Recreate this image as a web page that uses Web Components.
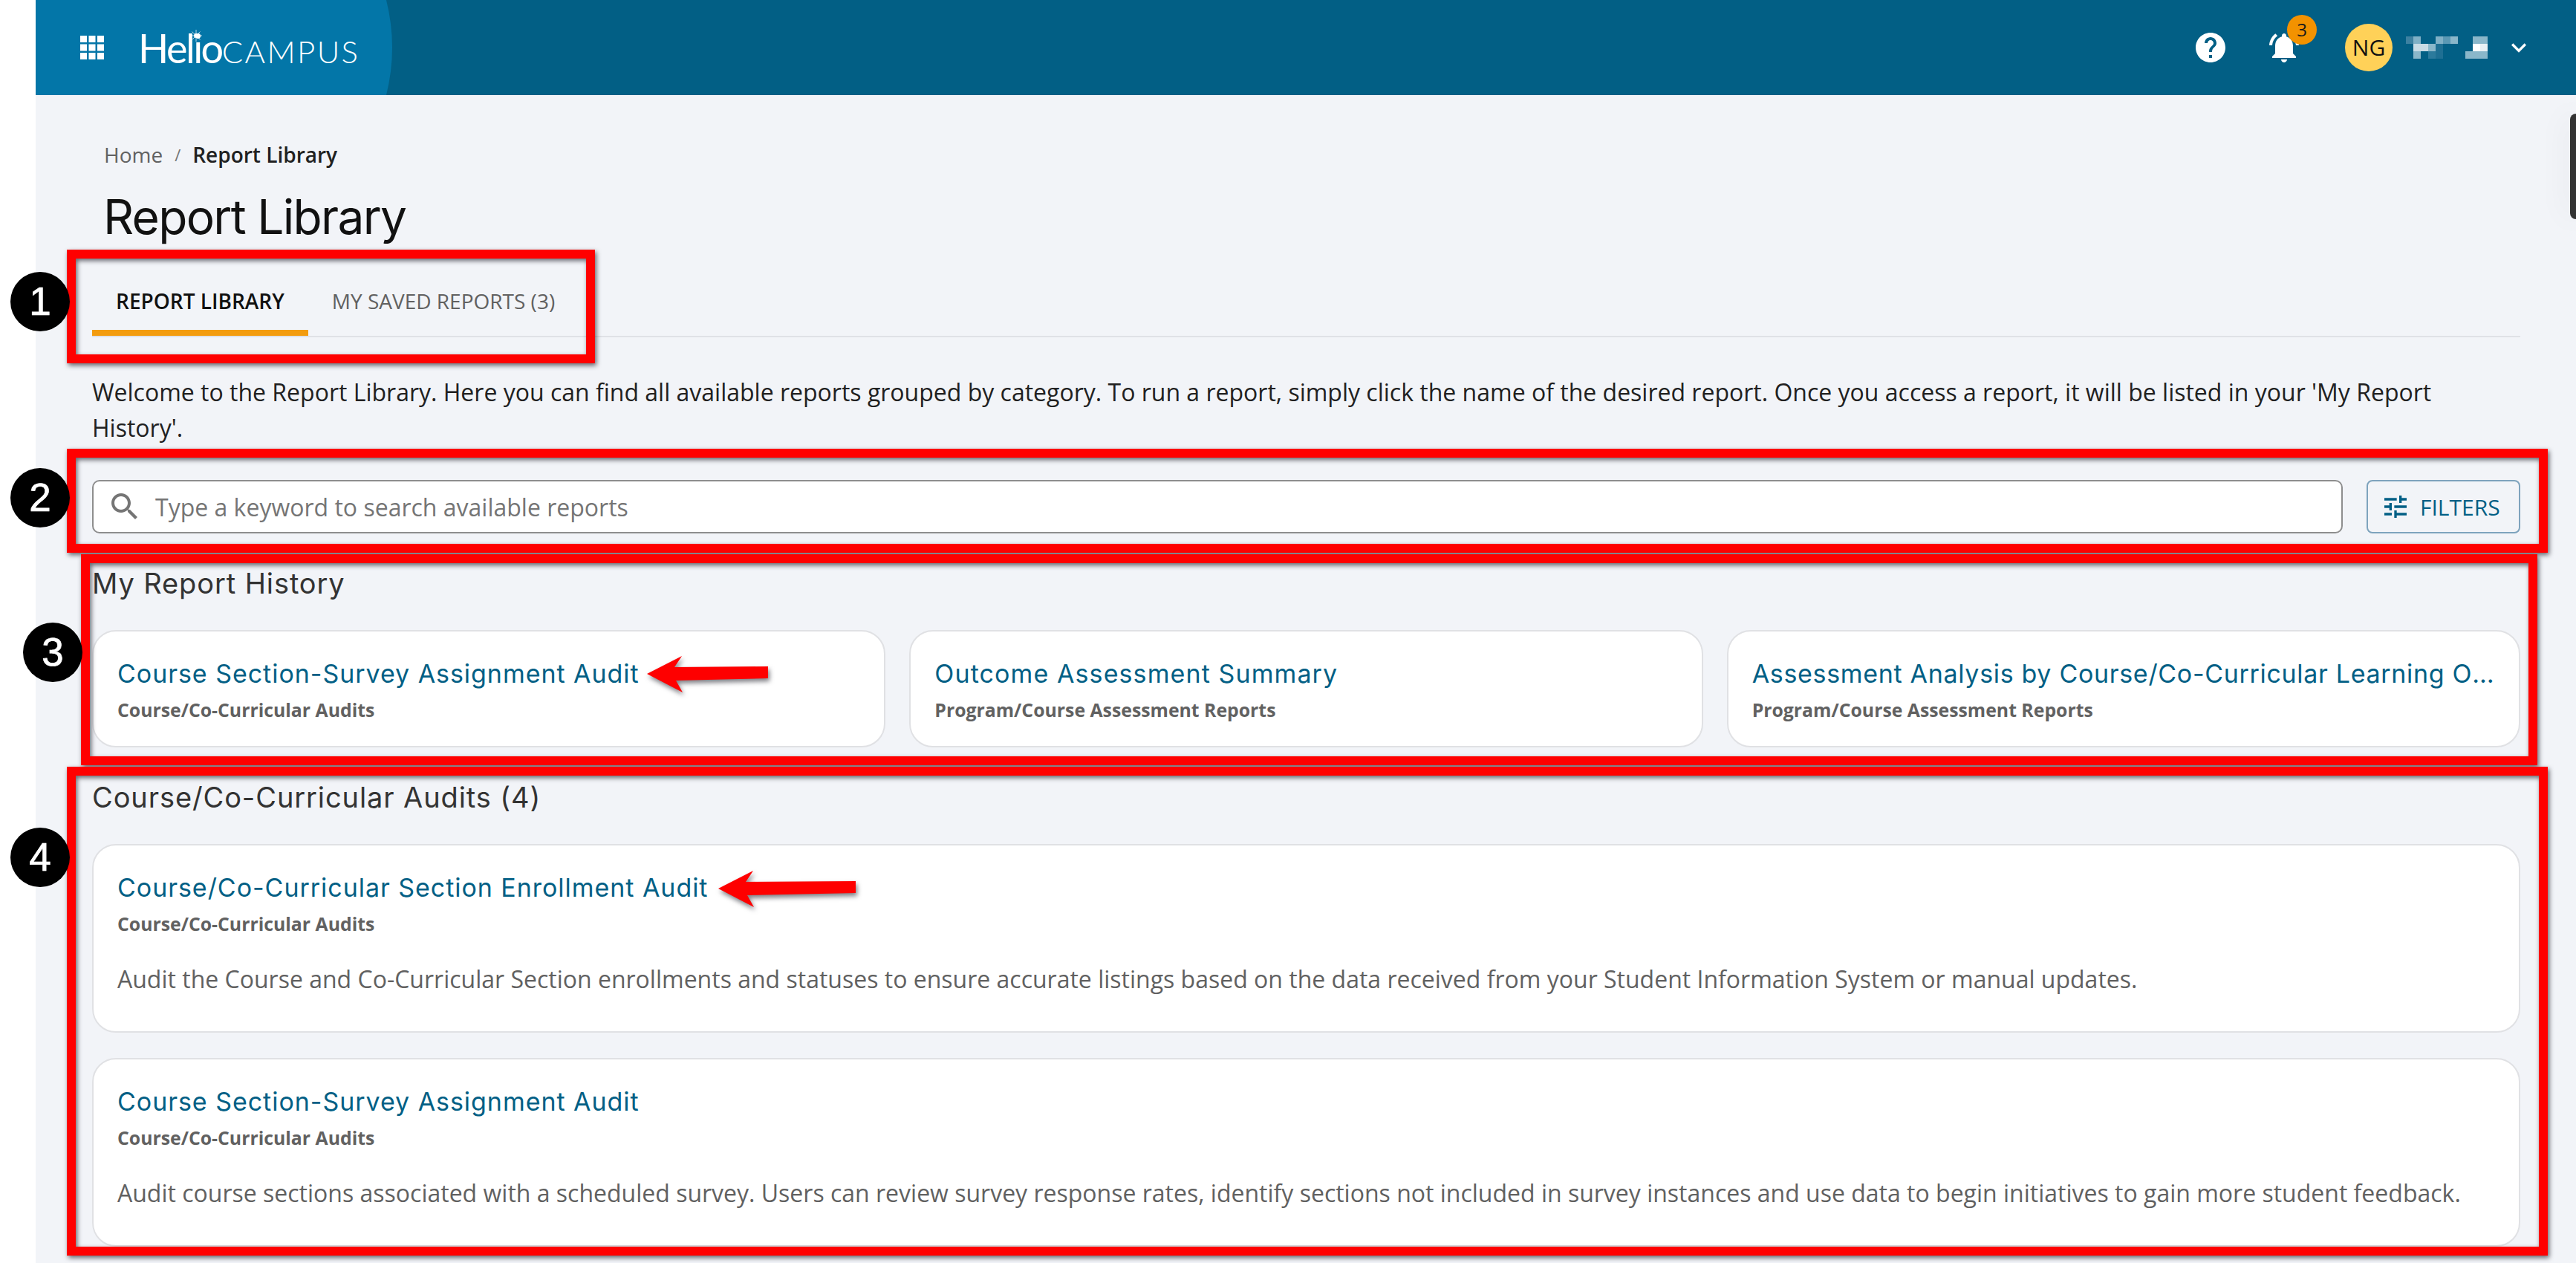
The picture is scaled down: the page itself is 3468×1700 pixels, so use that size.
<!DOCTYPE html>
<html>
<head>
<meta charset="utf-8">
<title>Report Library</title>
<style>
  html, body { margin: 0; height: 1700px; overflow: hidden; background: #fff; }
  body { font-family: "Open Sans", "Liberation Sans", sans-serif; }
</style>
</head>
<body>
<report-page>
  <app-header slot="header"></app-header>
  <bread-crumbs slot="crumbs" current="Report Library">Home</bread-crumbs>
  <h1 slot="title">Report Library</h1>
  <report-tabs slot="tabs"></report-tabs>
  <p slot="intro">Welcome to the Report Library. Here you can find all available reports grouped by category. To run a report, simply click the name of the desired report. Once you access a report, it will be listed in your 'My Report History'.</p>
  <search-bar slot="search"></search-bar>
  <report-section heading="My Report History" columns="3">
    <report-card title-text="Course Section-Survey Assignment Audit" category="Course/Co-Curricular Audits"></report-card>
    <report-card title-text="Outcome Assessment Summary" category="Program/Course Assessment Reports" style="--title-spacing:1.1px"></report-card>
    <report-card title-text="Assessment Analysis by Course/Co-Curricular Learning Outcome" category="Program/Course Assessment Reports" style="--title-spacing:.68px"></report-card>
  </report-section>
  <report-section heading="Course/Co-Curricular Audits (4)" columns="1">
    <report-card title-text="Course/Co-Curricular Section Enrollment Audit" category="Course/Co-Curricular Audits">Audit the Course and Co-Curricular Section enrollments and statuses to ensure accurate listings based on the data received from your Student Information System or manual updates.</report-card>
    <report-card title-text="Course Section-Survey Assignment Audit" category="Course/Co-Curricular Audits">Audit course sections associated with a scheduled survey. Users can review survey response rates, identify sections not included in survey instances and use data to begin initiatives to gain more student feedback.</report-card>
  </report-section>

  <red-frame slot="overlay" style="left:90px;top:336px;width:711px;height:153px"></red-frame>
  <red-frame slot="overlay" style="left:90px;top:604px;width:3340px;height:140px"></red-frame>
  <red-frame slot="overlay" style="left:109px;top:746px;width:3307px;height:284px"></red-frame>
  <red-frame slot="overlay" style="left:90px;top:1032px;width:3340px;height:658px"></red-frame>
  <step-badge slot="overlay" style="left:14px;top:366px">1</step-badge>
  <step-badge slot="overlay" style="left:14px;top:630px">2</step-badge>
  <step-badge slot="overlay" style="left:31px;top:838px">3</step-badge>
  <step-badge slot="overlay" style="left:14px;top:1114px">4</step-badge>
  <red-arrow slot="overlay" length="162" style="left:872px;top:883px"></red-arrow>
  <red-arrow slot="overlay" length="184" style="left:968px;top:1172px"></red-arrow>
  <div slot="overlay" style="position:absolute;left:3460px;top:153px;width:8px;height:142px;background:#333;border-radius:16px 0 0 16px;box-shadow:0 0 40px rgba(0,0,0,.12)"></div>
</report-page>

<script>
const HEADING_FONT = '"Inter", "Liberation Sans", sans-serif';

class ReportPage extends HTMLElement {
  constructor() {
    super();
    this.attachShadow({ mode: 'open' });
    this.shadowRoot.innerHTML = `
      <style>
        :host { display: block; position: relative; height: 1700px; overflow: hidden; }
        #shell { margin-left: 48px; height: 1700px; background: #f2f4f8; }
        main { padding: 0 75px 0 76px; display: flex; flex-direction: column; }
        ::slotted(h1) {
          margin: 24px 0 34px 15px;
          font: 400 64px/80px ${HEADING_FONT};
          letter-spacing: -1.7px;
          color: #111;
        }
        ::slotted(p) {
          margin: 50px 0 46px;
          font-size: 32px;
          line-height: 48px;
          color: #212121;
        }
      </style>
      <div id="shell">
        <slot name="header"></slot>
        <main>
          <slot name="crumbs"></slot>
          <slot name="title"></slot>
          <slot name="tabs"></slot>
          <slot name="intro"></slot>
          <slot name="search"></slot>
          <slot></slot>
        </main>
      </div>
      <slot name="overlay"></slot>
    `;
  }
}

class AppHeader extends HTMLElement {
  constructor() {
    super();
    this.attachShadow({ mode: 'open' });
    const blur = [
      ['#3d81a1','#7fb0c6',0,0,'#7fb0c6','#5a98b4','#8ab7ca',0,0,'#8ab7ca','#8ab7ca'],
      [0,'#c8dbe5','#c8dbe5','#8ab7ca','#1e6f93',0,0,0,0,'#fff','#e8f0f4'],
      [0,'#8ab7ca',0,'#2c7a9c','#1e6f93',0,0,0,'#8ab7ca','#8ab7ca','#8ab7ca']
    ].flat().map(c => `<i style="background:${c || 'transparent'}"></i>`).join('');
    this.shadowRoot.innerHTML = `
      <style>
        :host { display: block; }
        header {
          height: 128px; background: #025f85; color: #fff;
          display: flex; align-items: center; position: relative;
        }
        #brand {
          width: 480px; height: 128px; flex: none; background: #0376a8;
          clip-path: path('M0 0H472Q488 64 472 128H0Z');
          display: flex; align-items: center; padding-left: 60px; box-sizing: border-box;
        }
        #logo { margin-left: 46px; font-family: Lato, sans-serif; font-weight: 300; white-space: nowrap; position: relative; }
        #logo b { font-weight: 400; font-size: 54px; letter-spacing: -2.5px; }
        #logo span { font-size: 42px; letter-spacing: 2.4px; }
        #logo svg { position: absolute; left: 70px; top: 8px; }
        #tools { margin-left: auto; display: flex; align-items: center; height: 128px; padding-right: 57px; }
        #tools svg { display: block; fill: #fff; flex: none; }
        #bell { position: relative; margin-left: 51px; }
        #count {
          position: absolute; left: 28px; top: -20px; width: 40px; height: 40px;
          border-radius: 50%; background: #f39200; color: #1a1a1a;
          font-size: 24px; line-height: 40px; text-align: center;
        }
        #avatar {
          margin-left: 58px; width: 64px; height: 64px; border-radius: 50%;
          background: #ffd158; color: #111; font-size: 30px; line-height: 64px; text-align: center;
        }
        #blur { margin-left: 18px; display: grid; grid-template-columns: repeat(11, 10px); grid-auto-rows: 10px; }
        #blur i { display: block; }
        #chev { margin-left: 22px; }
      </style>
      <header>
        <div id="brand">
          <svg width="32" height="32" viewBox="0 0 32 32" fill="#fff">
            <rect width="9" height="9"/><rect x="11.5" width="9" height="9"/><rect x="23" width="9" height="9"/>
            <rect y="11.5" width="9" height="9"/><rect x="11.5" y="11.5" width="9" height="9"/><rect x="23" y="11.5" width="9" height="9"/>
            <rect y="23" width="9" height="9"/><rect x="11.5" y="23" width="9" height="9"/><rect x="23" y="23" width="9" height="9"/>
          </svg>
          <div id="logo"><b>Helio</b><span>CAMPUS</span>
            <svg width="16" height="16" viewBox="0 0 16 16" fill="#fff"><circle cx="8" cy="8" r="3"/><path d="M8 0v16M0 8h16M2.5 2.5l11 11M13.5 2.5l-11 11" stroke="#fff" stroke-width=".7"/></svg>
          </div>
        </div>
        <div id="tools">
          <svg width="48" height="48" viewBox="0 0 24 24"><path d="M12 2C6.48 2 2 6.48 2 12s4.48 10 10 10 10-4.48 10-10S17.52 2 12 2zm1 17h-2v-2h2v2zm2.07-7.75l-.9.92C13.45 12.9 13 13.5 13 15h-2v-.5c0-1.1.45-2.1 1.17-2.83l1.24-1.26c.37-.36.59-.86.59-1.41 0-1.1-.9-2-2-2s-2 .9-2 2H8c0-2.21 1.79-4 4-4s4 1.79 4 4c0 .88-.36 1.68-.93 2.25z"/></svg>
          <div id="bell">
            <svg width="48" height="48" viewBox="0 0 24 24"><path d="M7.58 4.08 6.15 2.65C3.75 4.48 2.17 7.3 2.03 10.5h2c.15-2.65 1.51-4.97 3.55-6.42zm12.39 6.42h2c-.15-3.2-1.73-6.02-4.12-7.85l-1.42 1.43c2.02 1.45 3.39 3.77 3.54 6.42zM18 11c0-3.07-1.64-5.64-4.5-6.32V4c0-.83-.67-1.5-1.5-1.5s-1.5.67-1.5 1.5v.68C7.63 5.36 6 7.92 6 11v5l-2 2v1h16v-1l-2-2v-5zm-6 11c.14 0 .27-.01.4-.04.65-.14 1.18-.58 1.44-1.18.1-.24.15-.5.15-.78h-4c.01 1.1.9 2 2.01 2z"/></svg>
            <div id="count">3</div>
          </div>
          <div id="avatar">NG</div>
          <div id="blur">${blur}</div>
          <svg id="chev" width="40" height="40" viewBox="0 0 24 24"><path d="M16.59 8.59 12 13.17 7.41 8.59 6 10l6 6 6-6z"/></svg>
        </div>
      </header>
    `;
  }
}

class BreadCrumbs extends HTMLElement {
  constructor() {
    super();
    this.attachShadow({ mode: 'open' });
    this.shadowRoot.innerHTML = `
      <style>
        :host { display: flex; margin: 60px 0 0 16px; font-size: 28px; line-height: 40px; color: #616161; }
        i { font-style: normal; margin: 0 16px; font-size: 22px; color: #757575; }
        b { font-weight: 600; color: #212121; }
      </style>
      <slot></slot><i>/</i><b></b>
    `;
  }
  connectedCallback() {
    this.shadowRoot.querySelector('b').textContent = this.getAttribute('current');
  }
}

class ReportTabs extends HTMLElement {
  constructor() {
    super();
    this.attachShadow({ mode: 'open' });
    this.shadowRoot.innerHTML = `
      <style>
        :host { display: flex; border-bottom: 2px solid #dfe1e6; font-size: 28px; }
        div { height: 78px; line-height: 78px; padding: 0 32px; border-bottom: 8px solid transparent; white-space: nowrap; color: #616161; }
        #on { color: #111; font-weight: 600; border-bottom-color: #f39c0f; }
      </style>
      <div id="on">REPORT LIBRARY</div>
      <div>MY SAVED REPORTS (3)</div>
    `;
  }
}

class SearchBar extends HTMLElement {
  constructor() {
    super();
    this.attachShadow({ mode: 'open' });
    this.shadowRoot.innerHTML = `
      <style>
        :host { display: flex; gap: 32px; height: 72px; }
        #box {
          flex: 1; display: flex; align-items: center; gap: 17px; box-sizing: border-box;
          padding-left: 18px; background: #fff; border: 2px solid #8e8e8e; border-radius: 10px;
          font-size: 32px; color: #757575;
        }
        #box svg { fill: #757575; }
        button {
          width: 207px; box-sizing: border-box; padding: 0 0 0 17px; display: flex; align-items: center; gap: 13px;
          background: #f2f4f8; border: 2px solid #7ea3bd; border-radius: 8px;
          font: 30px "Open Sans", sans-serif; color: #025f85;
        }
        button svg { fill: #025f85; }
      </style>
      <div id="box">
        <svg width="48" height="48" viewBox="0 0 24 24"><path d="M15.5 14h-.79l-.28-.27C15.41 12.59 16 11.11 16 9.5 16 5.91 13.09 3 9.5 3S3 5.91 3 9.5 5.91 16 9.5 16c1.61 0 3.09-.59 4.23-1.57l.27.28v.79l5 4.99L20.49 19l-4.99-5zm-6 0C7.01 14 5 11.99 5 9.5S7.01 5 9.5 5 14 7.01 14 9.5 11.99 14 9.5 14z"/></svg>
        <span>Type a keyword to search available reports</span>
      </div>
      <button>
        <svg width="40" height="40" viewBox="0 0 24 24"><path d="M3 17v2h6v-2H3zM3 5v2h10V5H3zm10 16v-2h8v-2h-8v-2h-2v6h2zM7 9v2H3v2h4v2h2V9H7zm14 4v-2H11v2h10zm-6-4h2V7h4V5h-4V3h-2v6z"/></svg>
        FILTERS
      </button>
    `;
  }
}

class ReportSection extends HTMLElement {
  constructor() {
    super();
    this.attachShadow({ mode: 'open' });
    this.shadowRoot.innerHTML = `
      <style>
        :host { display: block; margin-top: 43px; }
        :host + :host { margin-top: 42px; }
        h2 { margin: 0 0 39px; font: 400 38px/48px ${HEADING_FONT}; letter-spacing: .9px; color: #333; }
        #list { display: grid; gap: 34px 32px; }
      </style>
      <h2></h2>
      <div id="list"><slot></slot></div>
    `;
  }
  connectedCallback() {
    this.shadowRoot.querySelector('h2').textContent = this.getAttribute('heading');
    const n = this.getAttribute('columns') || 1;
    this.shadowRoot.getElementById('list').style.gridTemplateColumns = `repeat(${n}, minmax(0, 1fr))`;
  }
}

class ReportCard extends HTMLElement {
  constructor() {
    super();
    this.attachShadow({ mode: 'open' });
    this.shadowRoot.innerHTML = `
      <style>
        :host {
          display: block; box-sizing: border-box; min-width: 0;
          padding: 33px 32px 25px; background: #fff;
          border: 2px solid #e0e1e4; border-radius: 32px;
        }
        #t { font: 400 34px/48px ${HEADING_FONT}; letter-spacing: var(--title-spacing, .96px); color: #025f85; white-space: nowrap; overflow: hidden; text-overflow: ellipsis; }
        #c { font-size: 24.8px; line-height: 48px; font-weight: 700; color: #616161; }
        #d { margin-top: 27px; margin-bottom: 21px; font-size: 32px; line-height: 48px; color: #616161; white-space: nowrap; display: block; }
        :host(:empty) #d { display: none; }
      </style>
      <div id="t"></div>
      <div id="c"></div>
      <div id="d"><slot></slot></div>
    `;
  }
  connectedCallback() {
    this.shadowRoot.getElementById('t').textContent = this.getAttribute('title-text');
    this.shadowRoot.getElementById('c').textContent = this.getAttribute('category');
  }
}

class RedFrame extends HTMLElement {
  constructor() {
    super();
    this.attachShadow({ mode: 'open' });
    this.shadowRoot.innerHTML = `
      <style>
        :host {
          position: absolute; box-sizing: border-box; border: 12px solid #ff0000;
          filter: drop-shadow(2px 3px 3px rgba(40,40,50,.7)); pointer-events: none;
        }
      </style>
    `;
  }
}

class StepBadge extends HTMLElement {
  constructor() {
    super();
    this.attachShadow({ mode: 'open' });
    this.shadowRoot.innerHTML = `
      <style>
        :host {
          position: absolute; width: 80px; height: 80px; border-radius: 50%;
          background: #000; color: #fff; text-align: center;
          font: 53px/80px "Liberation Sans", Arial, sans-serif;
          -webkit-text-stroke: .7px #fff;
        }
      </style>
      <slot></slot>
    `;
  }
}

class RedArrow extends HTMLElement {
  constructor() {
    super();
    this.attachShadow({ mode: 'open' });
    this.shadowRoot.innerHTML = `
      <style>
        :host { position: absolute; height: 50px; }
        svg { display: block; filter: drop-shadow(2px 4px 3px rgba(40,40,50,.6)); overflow: visible; }
      </style>
      <svg height="50"><path fill="#fe0000"/></svg>
    `;
  }
  connectedCallback() {
    const len = Number(this.getAttribute('length'));
    const svg = this.shadowRoot.querySelector('svg');
    svg.setAttribute('width', len);
    svg.querySelector('path').setAttribute('d', `M-1 24 46 0 36 15 ${len} 14V30L38 33 47 49Z`);
  }
}

customElements.define('report-page', ReportPage);
customElements.define('app-header', AppHeader);
customElements.define('bread-crumbs', BreadCrumbs);
customElements.define('report-tabs', ReportTabs);
customElements.define('search-bar', SearchBar);
customElements.define('report-section', ReportSection);
customElements.define('report-card', ReportCard);
customElements.define('red-frame', RedFrame);
customElements.define('step-badge', StepBadge);
customElements.define('red-arrow', RedArrow);
</script>
</body>
</html>
